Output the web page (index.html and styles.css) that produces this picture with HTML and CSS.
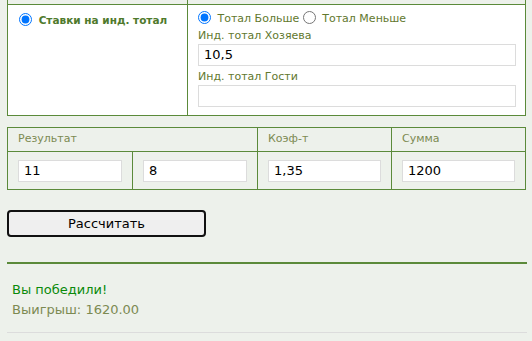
FILE: index.html
```html
<!DOCTYPE html>
<html lang="ru">
  <head>
    <meta charset="UTF-8">
    <meta name="viewport" content="width=device-width, initial-scale=1">
    <title>Калькулятор ставок</title>
    <link rel="stylesheet" href="styles.css">
  </head>
  <body>

    <main class="calc">
      <table class="bets">
        <colgroup><col class="bets-kind"><col></colgroup>
        <tbody>
          <tr class="cut"><td></td><td></td></tr>
          <tr>
            <td class="kind">
              <label class="kind-label"><input type="radio" name="kind" checked> Ставки на инд. тотал</label>
            </td>
            <td class="opts">
              <div class="choice">
                <label><input type="radio" name="side" checked> Тотал Больше</label>
                <label><input type="radio" name="side"> Тотал Меньше</label>
              </div>
              <label class="field">
                <span>Инд. тотал Хозяева</span>
                <input type="text" value="10,5">
              </label>
              <label class="field">
                <span>Инд. тотал Гости</span>
                <input type="text" value="">
              </label>
            </td>
          </tr>
        </tbody>
      </table>

      <table class="result">
        <colgroup><col><col><col class="wide"><col class="wide"></colgroup>
        <thead>
          <tr><th colspan="2">Результат</th><th>Коэф-т</th><th>Сумма</th></tr>
        </thead>
        <tbody>
          <tr>
            <td><input type="text" value="11"></td>
            <td><input type="text" value="8"></td>
            <td><input type="text" value="1,35"></td>
            <td><input type="text" value="1200"></td>
          </tr>
        </tbody>
      </table>

      <button type="button" class="run">Рассчитать</button>

      <section class="outcome">
        <p class="win">Вы победили!</p>
        <p class="payout">Выигрыш: 1620.00</p>
      </section>
    </main>

  </body>
</html>
```

FILE: styles.css
```css
:root {
  --clr-bg:     #edf1eb;
  --clr-line:   #5b8a3a;
  --clr-label:  #4f7a2c;
  --clr-text:   #62782e;
  --clr-muted:  #7c8a52;
  --clr-win:    #0a8a0a;
  --clr-field:  #dcdcdc;
}

html, body {
  margin: 0;
  padding: 0;
  background: var(--clr-bg);
  font: normal normal 12px/1.4 "DejaVu Sans", Verdana, sans-serif;
}

*, *::before, *::after {
  box-sizing: border-box;
}

.calc {
  width: 520px;
  margin-left: 7px;
  display: flex;
  flex-direction: column;
  align-items: flex-start;
}

table {
  width: 519px;
  border-collapse: collapse;
  table-layout: fixed;
}

td, th {
  border: 1px solid var(--clr-line);
  padding: 0;
  vertical-align: top;
}

input[type="text"] {
  display: block;
  width: 100%;
  height: 22px;
  margin: 0;
  padding: 0 5px;
  border: 1px solid var(--clr-field);
  background: #fff;
  color: #000;
  font: 13px/20px "DejaVu Sans", Verdana, sans-serif;
  outline: none;
}

input[type="radio"] {
  margin: 0 3px 0 0;
  width: 13px;
  height: 13px;
  vertical-align: -2px;
}

/* Bet kind table */

.bets-kind { width: 180px }

.bets tr.cut td {
  border-top: none;
  height: 4px;
}

.bets td.kind,
.bets td.opts {
  background: #fff;
}

.kind {
  padding: 7px 10px 0 11px;
}

.kind-label {
  color: var(--clr-label);
  font-weight: bold;
  font-size: 10.5px;
}

.opts {
  padding: 6px 9px 8px 10px;
  color: var(--clr-text);
}

.choice {
  font-size: 11px;
  line-height: 16px;
}

.choice label + label input { margin-left: 0 }

.field {
  display: block;
}

.field span {
  display: block;
  font-size: 11px;
  line-height: 17px;
}

.field + .field { margin-top: 2px }

/* Result table */

.result {
  margin-top: 11px;
}

.result col { width: 125px }
.result col.wide { width: 134px }

.result th {
  height: 24px;
  padding: 0 10px;
  text-align: left;
  vertical-align: middle;
  color: var(--clr-muted);
  font-weight: normal;
  font-size: 11px;
}

.result td {
  padding: 8px 10px 7px;
}

/* Action */

.run {
  margin-top: 20px;
  width: 199px;
  height: 27px;
  border: 2px solid #111;
  border-radius: 4px;
  background: #efefef;
  color: #000;
  font: 13px "DejaVu Sans", Verdana, sans-serif;
}

.outcome {
  align-self: stretch;
  margin-top: 25px;
  border-top: 2px solid var(--clr-line);
  border-bottom: 1px solid var(--clr-field);
  padding: 16px 5px 12px;
}

.outcome p {
  margin: 0;
  font-size: 13px;
  line-height: 20px;
}

.win { color: var(--clr-win) }
.payout { color: var(--clr-muted) }
```
